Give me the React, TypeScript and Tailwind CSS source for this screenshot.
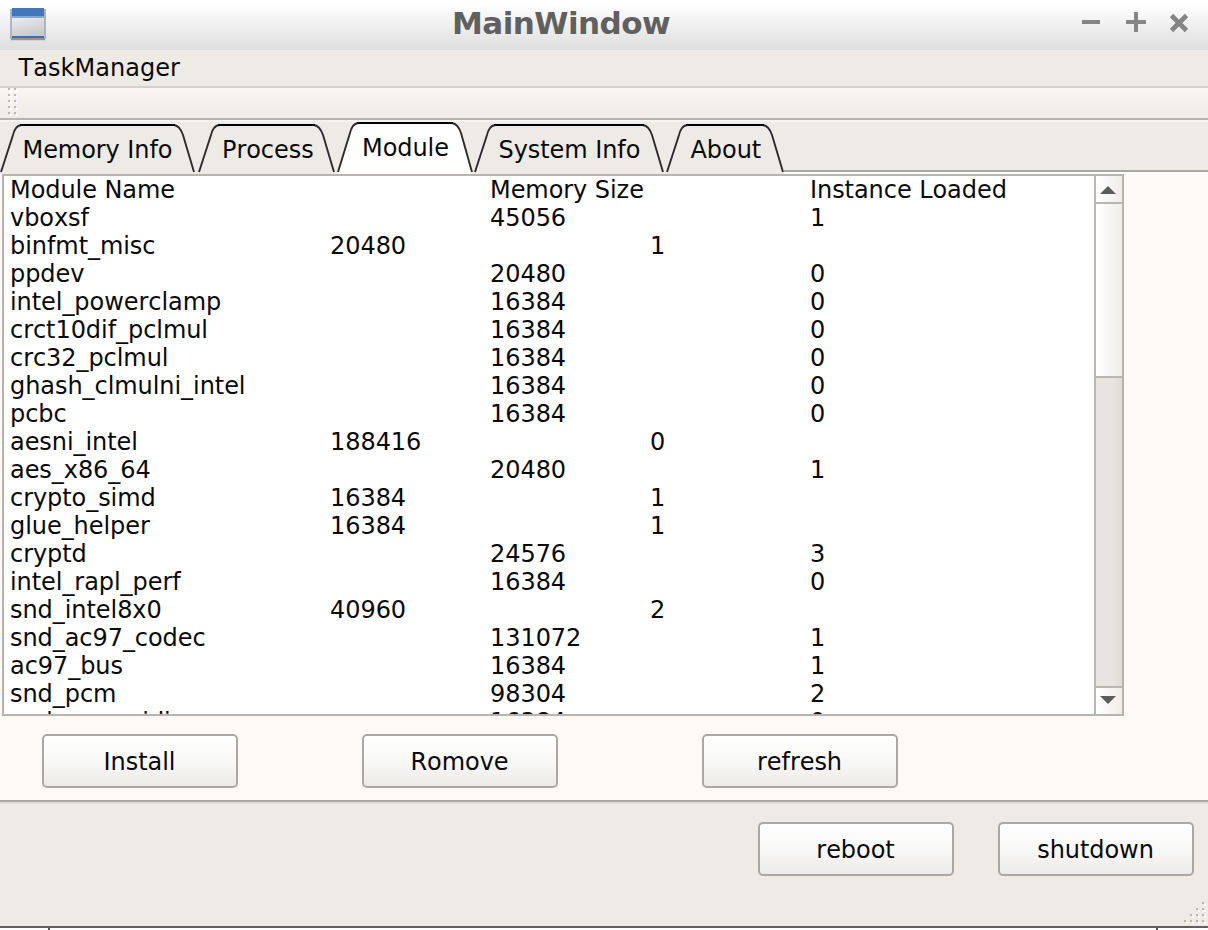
import React from "react";

type Row = [name: string, size: string, loaded: string];

const rows: Row[] = [
  ["Module Name", "Memory Size", "Instance Loaded"],
  ["vboxsf", "45056", "1"],
  ["binfmt_misc", "20480", "1"],
  ["ppdev", "20480", "0"],
  ["intel_powerclamp", "16384", "0"],
  ["crct10dif_pclmul", "16384", "0"],
  ["crc32_pclmul", "16384", "0"],
  ["ghash_clmulni_intel", "16384", "0"],
  ["pcbc", "16384", "0"],
  ["aesni_intel", "188416", "0"],
  ["aes_x86_64", "20480", "1"],
  ["crypto_simd", "16384", "1"],
  ["glue_helper", "16384", "1"],
  ["cryptd", "24576", "3"],
  ["intel_rapl_perf", "16384", "0"],
  ["snd_intel8x0", "40960", "2"],
  ["snd_ac97_codec", "131072", "1"],
  ["ac97_bus", "16384", "1"],
  ["snd_pcm", "98304", "2"],
  ["snd_seq_midi", "16384", "0"],
];

// Rows whose values sit one tab stop further left.
const shortTab = new Set(["binfmt_misc", "aesni_intel", "crypto_simd", "glue_helper", "snd_intel8x0"]);

function Tab({ label, width, margin, active = false, pad }: { label: string; width: number; margin: string; active?: boolean; pad: string }) {
  const top = active ? 3 : 5;
  const d = `M1 52 L13 ${top + 10} Q15 ${top + 1} 21 ${top} H${width - 21} Q${width - 15} ${top + 1} ${width - 12} ${top + 10} L${width - 1} 52`;
  return (
    <div className={`grid shrink-0 h-[54px] ${margin}`} style={{ width }}>
      <svg className="col-start-1 row-start-1 block" width={width} height="54" viewBox={`0 0 ${width} 54`}>
        <path d={d} fill={active ? "#ffffff" : "#eeebe6"} />
        {active && <rect x="1" y="51" width={width - 2} height="3" fill="#ffffff" />}
        <path d={d} fill="none" stroke="#2b2b2b" strokeWidth="1.9" />
        <path d={`M20 ${top} H${width - 20}`} stroke="#000" strokeWidth="2" />
      </svg>
      <span className={`col-start-1 row-start-1 whitespace-nowrap leading-7 ${active ? "pt-[14px]" : "pt-[16px]"} ${pad}`}>{label}</span>
    </div>
  );
}

function Button({ label, className }: { label: string; className: string }) {
  return (
    <button
      className={`h-[54px] w-[196px] shrink-0 rounded-[5px] border-2 border-[#aba7a4] bg-linear-to-b from-white via-[#f8f8f7] to-[#edebe7] pt-[2px] pr-px leading-7 ${className}`}
    >
      {label}
    </button>
  );
}

const gripDots = [
  [1202, 902],
  [1196, 908], [1202, 908],
  [1190, 914], [1196, 914], [1202, 914],
  [1184, 920], [1190, 920], [1196, 920], [1202, 920],
];

export default function App() {
  return (
    <div className="flex h-[930px] w-[1208px] flex-col overflow-hidden bg-[#eeebe6] font-['DejaVu_Sans',sans-serif] text-[24px] tracking-[-0.06px] text-[#0a0a0a] [font-kerning:none]">
      <header className="flex h-[50px] shrink-0 bg-linear-to-b from-white from-8% to-[#dedede]">
        <svg className="mt-2 ml-[10px]" width="36" height="34" viewBox="0 0 36 34">
          <defs>
            <linearGradient id="win" x1="0" y1="0" x2="0.4" y2="1">
              <stop offset="0" stopColor="#ececec" />
              <stop offset="1" stopColor="#cacaca" />
            </linearGradient>
          </defs>
          <rect y="1" width="36" height="30" fill="#a9b5c8" />
          <rect x="2" width="32" height="8" fill="#4476bb" />
          <rect x="2" y="8" width="32" height="2" fill="#86a5d3" />
          <rect x="2" y="10" width="32" height="18" fill="url(#win)" />
          <rect x="2" y="28" width="32" height="2" fill="#3f6dab" />
          <rect x="1" y="30" width="34" height="2" fill="#929498" />
          <rect x="1" y="32" width="34" height="1" fill="#d1d1d1" />
        </svg>
        <h1 className="ml-[406px] pt-[4.5px] text-[31px] leading-[37px] font-bold tracking-[-0.55px] text-[#606060]">MainWindow</h1>
        <svg className="mt-[10px] mr-[18px] ml-auto" width="110" height="24" viewBox="0 0 110 24" fill="none" stroke="#858585">
          <path d="M2 12 H20 M46 12 H66 M56 2 V22" strokeWidth="4" />
          <path d="M91.5 5.5 L106.5 20.5 M106.5 5.5 L91.5 20.5" strokeWidth="4.6" />
        </svg>
      </header>
      <nav className="h-9 shrink-0 pt-[4px] pl-[18.5px] leading-7 tracking-[0.05px]">TaskManager</nav>
      <div className="flex h-[34px] shrink-0 border-y-2 border-t-[#d3d1ce] border-b-[#b5b1ac] bg-linear-to-b from-[#f9f6f2] to-[#efece7]">
        <svg className="ml-2 overflow-visible" width="10" height="30" viewBox="0 0 10 30">
          {[0, 6, 12, 18, 24, 30].map((y) => (
            <g key={y}>
              <rect y={y} width="2" height="2" fill="#bbb8b4" />
              <rect x="2" y={y + 2} width="2" height="2" fill="#fff" />
              <rect x="6" y={y} width="2" height="2" fill="#bbb8b4" />
              <rect x="8" y={y + 2} width="2" height="2" fill="#fff" />
            </g>
          ))}
        </svg>
      </div>
      <div className="flex h-[54px] shrink-0 border-t-2 border-[#f6f4f0]">
        <div className="-mt-[2px] flex">
          <Tab label="Memory Info" width={195} margin="" pad="pl-[22.5px]" />
          <Tab label="Process" width={137} margin="ml-[3px]" pad="pl-[24px]" />
          <Tab label="Module" width={136} margin="ml-[2px]" pad="pl-[25px]" active />
          <Tab label="System Info" width={190} margin="ml-[1px]" pad="pl-[24.5px]" />
          <Tab label="About" width={118} margin="ml-[2px]" pad="pl-[24.5px]" />
        </div>
        <div className="mt-12 h-1 grow border-t-2 border-[#aaa7a2] bg-[#fffefd]" />
      </div>
      <main className="h-[626px] shrink-0 bg-[#fdf9f6] pl-[2px]">
        <div className="flex h-[542px] w-[1122px] border-2 border-[#b7b3af] bg-white">
          <div className="h-[538px] w-[1090px] overflow-hidden pl-[6px]">
            {rows.map(([name, size, loaded]) => (
              <div key={name} className={`grid h-7 leading-7 whitespace-nowrap ${shortTab.has(name) ? "grid-cols-[320px_320px_1fr]" : "grid-cols-[480px_320px_1fr]"}`}>
                <span>{name}</span>
                <span>{size}</span>
                <span>{loaded}</span>
              </div>
            ))}
          </div>
          <div className="flex w-7 flex-col border-l-2 border-[#bab6b2] bg-linear-to-r from-[#e8e4e1] from-60% to-[#dfdbd7]">
            <div className="flex h-[28px] justify-center border-b-2 border-[#bab6b2] bg-linear-to-r from-white to-[#eeedea] pt-[10px] pr-[2px]">
              <svg width="16" height="8" viewBox="0 0 16 8"><path d="M8 0 L16 8 H0 Z" fill="#5c5c5c" /></svg>
            </div>
            <div className="h-[174px] border-b-2 border-[#bab6b2] bg-linear-to-r from-white to-[#eeedea]" />
            <div className="mt-auto flex h-[28px] justify-center border-t-2 border-[#bab6b2] bg-linear-to-r from-white to-[#eeedea] pt-[8px] pr-[2px]">
              <svg width="16" height="8" viewBox="0 0 16 8"><path d="M0 0 H16 L8 8 Z" fill="#5c5c5c" /></svg>
            </div>
          </div>
        </div>
        <div className="flex pt-[18px] pl-10">
          <Button label="Install" className="" />
          <Button label="Romove" className="ml-[124px]" />
          <Button label="refresh" className="ml-[144px]" />
        </div>
      </main>
      <footer className="h-[126px] shrink-0 border-t-2 border-[#aaa6a2]">
        <div className="flex h-[98px] justify-end border-t-2 border-[#e1ded9] pt-[18px] pr-[14px]">
          <Button label="reboot" className="" />
          <Button label="shutdown" className="ml-11" />
        </div>
        <svg className="ml-auto block" width="26" height="26" viewBox="1182 900 26 26">
          {gripDots.map(([x, y]) => (
            <g key={`${x}-${y}`}>
              <rect x={x} y={y} width="2" height="2" fill="#bbb8b4" />
              <rect x={x + 2} y={y + 2} width="2" height="2" fill="#fff" />
            </g>
          ))}
        </svg>
      </footer>
      <div className="flex h-1 shrink-0 justify-between border-t-2 border-[#625e5e] bg-white pr-[50px] pl-12">
        <i className="h-[2px] w-[2px] bg-[#555]" />
        <i className="h-[2px] w-[2px] bg-[#555]" />
      </div>
    </div>
  );
}
